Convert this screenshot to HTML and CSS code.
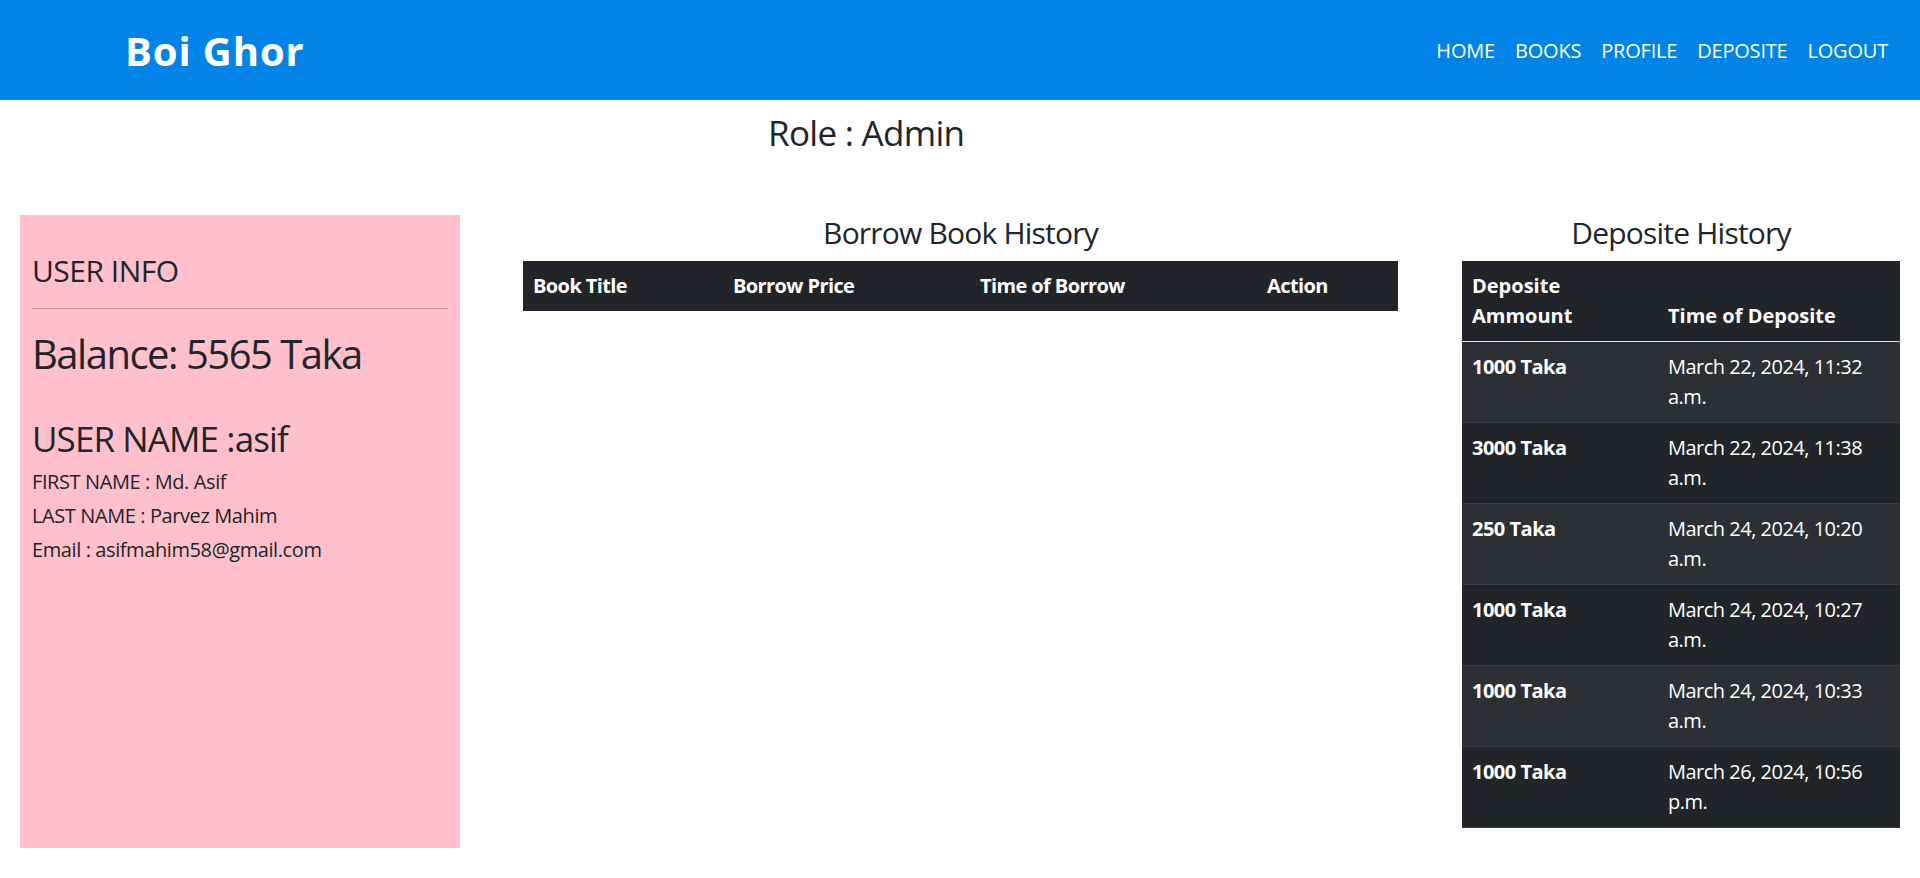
FILE: index.html
```html
<!DOCTYPE html>
<html lang="en">
<head>
<meta charset="utf-8">
<title>Boi Ghor</title>
<link rel="stylesheet" href="styles.css">
</head>
<body>
<header class="navbar">
  <a class="brand" href="#">Boi Ghor</a>
  <nav class="nav-links">
    <a href="#">HOME</a>
    <a href="#">BOOKS</a>
    <a href="#">PROFILE</a>
    <a href="#">DEPOSITE</a>
    <a href="#">LOGOUT</a>
  </nav>
</header>
<main>
  <h3 class="role">Role : Admin</h3>
  <div class="row">
    <section class="col col-info">
      <div class="info-card">
        <h4 class="info-title">USER INFO</h4>
        <hr class="divider">
        <h2 class="balance">Balance: 5565 Taka</h2>
        <h3 class="username">USER NAME :asif</h3>
        <h6 class="detail">FIRST NAME : Md. Asif</h6>
        <h6 class="detail">LAST NAME : Parvez Mahim</h6>
        <h6 class="detail">Email : asifmahim58@gmail.com</h6>
      </div>
    </section>
    <section class="col col-borrow">
      <h4 class="section-title">Borrow Book History</h4>
      <table class="table borrow-table">
        <thead>
          <tr>
            <th class="c-title">Book Title</th>
            <th class="c-price">Borrow Price</th>
            <th class="c-time">Time of Borrow</th>
            <th class="c-action">Action</th>
          </tr>
        </thead>
      </table>
    </section>
    <section class="col col-deposit">
      <h4 class="section-title">Deposite History</h4>
      <table class="table deposit-table">
        <thead>
          <tr>
            <th class="c-amount">Deposite Ammount</th>
            <th class="c-dtime">Time of Deposite</th>
          </tr>
        </thead>
        <tbody>
          <tr><th>1000 Taka</th><td>March 22, 2024, 11:32 a.m.</td></tr>
          <tr><th>3000 Taka</th><td>March 22, 2024, 11:38 a.m.</td></tr>
          <tr><th>250 Taka</th><td>March 24, 2024, 10:20 a.m.</td></tr>
          <tr><th>1000 Taka</th><td>March 24, 2024, 10:27 a.m.</td></tr>
          <tr><th>1000 Taka</th><td>March 24, 2024, 10:33 a.m.</td></tr>
          <tr><th>1000 Taka</th><td>March 26, 2024, 10:56 p.m.</td></tr>
        </tbody>
      </table>
    </section>
  </div>
</main>
</body>
</html>
```
FILE: styles.css
```css
* { box-sizing: border-box; }

html, body {
  margin: 0;
  padding: 0;
}

body {
  font-family: "Open Sans", "Noto Sans", "Liberation Sans", sans-serif;
  font-size: 20px;
  line-height: 1.5;
  color: #212529;
  background: #ffffff;
}

h2, h3, h4, h6 {
  margin: 0;
  font-weight: 400;
  line-height: 1.2;
}

/* ---------- navbar ---------- */
.navbar {
  height: 100px;
  background: #0283e7;
  display: flex;
  align-items: center;
  justify-content: space-between;
  padding: 2px 22px 0 125px;
}

.brand {
  color: #ffffff;
  text-decoration: none;
  font-size: 40px;
  font-weight: 700;
  line-height: 1.2;
  letter-spacing: 0.9px;
}

.nav-links {
  display: flex;
  align-items: center;
}

.nav-links a {
  color: #ffffff;
  text-decoration: none;
  font-size: 20px;
  line-height: 30px;
  padding: 0 10px;
  letter-spacing: -0.2px;
}

/* ---------- role ---------- */
.role {
  font-size: 35px;
  padding: 12px 0 0 768px;
  margin-bottom: 61px;
  letter-spacing: -0.7px;
}

/* ---------- columns ---------- */
.row {
  display: flex;
  align-items: flex-start;
}

.col-info {
  width: 480px;
  padding: 0 20px;
}

.col-borrow {
  width: 960px;
  padding: 0 42px 0 43px;
}

.col-deposit {
  width: 480px;
  padding: 0 20px 0 22px;
}

/* ---------- info card ---------- */
.info-card {
  background: #ffc0cb;
  height: 633px;
  padding: 38px 12px 12px 12px;
}

.info-title {
  font-size: 30px;
  margin-bottom: 10px;
  letter-spacing: -0.5px;
}

.divider {
  border: 0;
  border-top: 1px solid rgba(0, 0, 0, 0.25);
  margin: 19px 0 21px 0;
}

.balance {
  font-size: 40px;
  margin-bottom: 40px;
  letter-spacing: -1.5px;
}

.username {
  font-size: 35px;
  margin-bottom: 10px;
  letter-spacing: -0.9px;
}

.detail {
  font-size: 20px;
  margin-bottom: 10px;
  letter-spacing: -0.4px;
}

/* ---------- tables ---------- */
.section-title {
  font-size: 30px;
  text-align: center;
  margin-bottom: 10px;
  letter-spacing: -0.8px;
}

.table {
  width: 100%;
  border-collapse: collapse;
  table-layout: fixed;
  background: #212529;
  color: #ffffff;
}

.table th,
.table td {
  padding: 10px;
  text-align: left;
  vertical-align: top;
  line-height: 30px;
  font-size: 20px;
}

.table thead th {
  vertical-align: bottom;
}

.table th {
  font-weight: 700;
}

.borrow-table th {
  letter-spacing: -0.6px;
}

.c-title { width: 200px; }
.c-price { width: 247px; }
.c-time { width: 287px; }
.c-action { width: 141px; }

.c-amount { width: 196px; }
.c-dtime { width: 242px; }

.deposit-table thead th {
  border-bottom: 1px solid #dee2e6;
}

.deposit-table tbody th,
.deposit-table tbody td {
  border-bottom: 1px solid #373b3e;
  letter-spacing: -0.5px;
}

.deposit-table tbody tr:nth-child(odd) {
  background: #2c3034;
}

.deposit-table tbody tr:nth-child(even) {
  background: #212529;
}
```
